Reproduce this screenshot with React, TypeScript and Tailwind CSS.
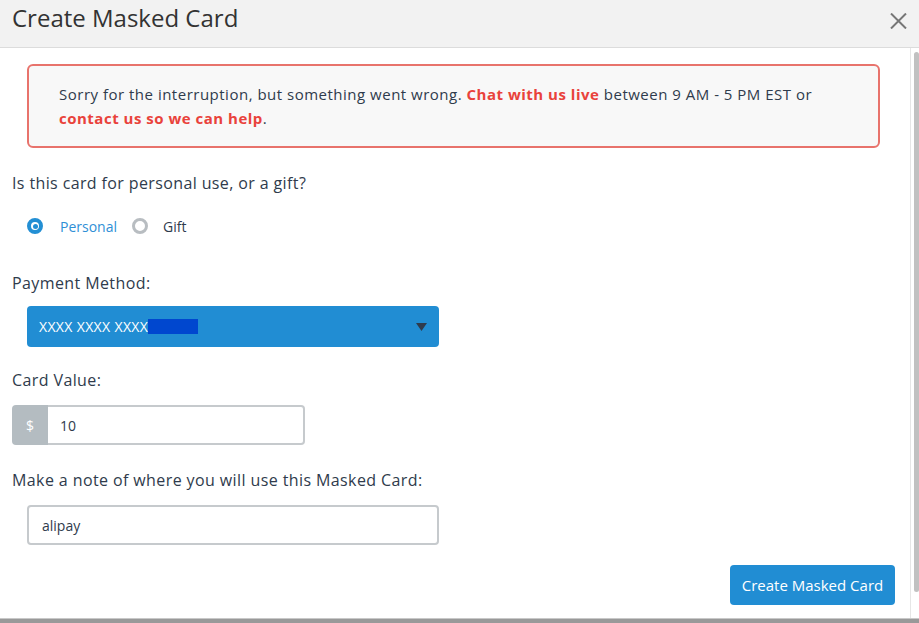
import React, { useState } from "react";

const Radio = ({ checked }: { checked: boolean }) =>
  checked ? (
    <span className="w-4 h-4 rounded-full border-[4px] border-[#238fd4] bg-white flex items-center justify-center">
      <span className="w-[5px] h-[5px] rounded-full bg-[#238fd4]" />
    </span>
  ) : (
    <span className="w-4 h-4 rounded-full border-[3px] border-[#b8bdc1] bg-white" />
  );

const App = () => {
  const [useType, setUseType] = useState<"personal" | "gift">("personal");

  return (
    <div className="w-[919px] h-[623px] flex flex-col bg-white overflow-hidden font-['Open_Sans',sans-serif] text-[#2f3b4c]">
      {/* header */}
      <div className="h-[48px] shrink-0 bg-[#f2f2f2] border-b border-[#dcdcdc] flex items-start justify-between pl-3 pr-3">
        <h2 className="text-[24px] leading-[33px] mt-[1px] text-[#333]">Create Masked Card</h2>
        <button className="mt-[13px] text-[#777]">
          <svg width="17" height="16" viewBox="0 0 17 16" fill="none" stroke="currentColor" strokeWidth="2">
            <path d="M1 0.5 L16 15.5 M16 0.5 L1 15.5" />
          </svg>
        </button>
      </div>

      <div className="flex-1 flex min-h-0">
        <div className="flex-1 flex flex-col pl-3">
          <div className="mt-4 ml-[15px] mr-[30px] border-2 border-[#e8736c] rounded-md bg-[#f8f8f8] px-[30px] py-4 text-[15px] leading-6 tracking-[0.5px]">
            Sorry for the interruption, but something went wrong.{" "}
            <a className="font-bold text-[#e9423b]">Chat with us live</a> between 9 AM - 5 PM EST or
            <br />
            <a className="font-bold text-[#e9423b]">contact us so we can help</a>.
          </div>

          <p className="mt-[23px] text-[16px] leading-6 tracking-[0.38px]">Is this card for personal use, or a gift?</p>
          <div className="mt-[21px] h-5 flex items-center pl-[15px] text-[14px]">
            <label className="flex items-center cursor-pointer" onClick={() => setUseType("personal")}>
              <Radio checked={useType === "personal"} />
              <span className={`ml-[17px] ${useType === "personal" ? "text-[#2f8fd6]" : ""}`}>Personal</span>
            </label>
            <label className="flex items-center ml-[15px] cursor-pointer" onClick={() => setUseType("gift")}>
              <Radio checked={useType === "gift"} />
              <span className={`ml-[15px] ${useType === "gift" ? "text-[#2f8fd6]" : ""}`}>Gift</span>
            </label>
          </div>

          <p className="mt-[35px] text-[16px] leading-6 tracking-[0.4px]">Payment Method:</p>
          <div className="mt-[11px] ml-[15px] w-[412px] h-[41px] rounded bg-[#218dd3] flex items-center justify-between px-3">
            <span className="flex items-center text-white text-[14px] tracking-[0.35px]">
              XXXX XXXX XXXX
              <span className="inline-block w-[50px] h-[15px] bg-[#0047cf]" />
            </span>
            <svg width="11" height="8" viewBox="0 0 11 8">
              <path d="M0 0 H11 L5.5 8 Z" fill="#2f3b4c" />
            </svg>
          </div>

          <p className="mt-[21px] text-[16px] leading-6 tracking-[0.4px]">Card Value:</p>
          <div className="mt-[13px] w-[293px] h-10 flex text-[14px]">
            <span className="w-9 flex items-center justify-center bg-[#b4bcc1] rounded-l text-white">$</span>
            <input
              defaultValue="10"
              className="flex-1 min-w-0 border-2 border-l-0 border-[#c6cacd] rounded-r pl-3 outline-none"
            />
          </div>

          <p className="mt-[23px] text-[16px] leading-6 tracking-[0.4px]">Make a note of where you will use this Masked Card:</p>
          <input
            defaultValue="alipay"
            className="mt-[13px] ml-[15px] w-[412px] h-10 border-2 border-[#c6cacd] rounded pl-[13px] text-[14px] outline-none"
          />

          <button className="mt-5 self-end mr-[15px] w-[165px] h-10 rounded bg-[#218dd3] text-white text-[15px]">
            Create Masked Card
          </button>
        </div>

        {/* scrollbar */}
        <div className="w-[9px] shrink-0 border-l border-[#e6e6e6] pl-[3px] pt-1">
          <div className="w-[5px] h-[540px] rounded-full bg-[#c1c1c1]" />
        </div>
      </div>

      <div className="h-[5px] shrink-0 border-t border-[#c8c8c8] bg-[#999]" />
    </div>
  );
};

export default App;
